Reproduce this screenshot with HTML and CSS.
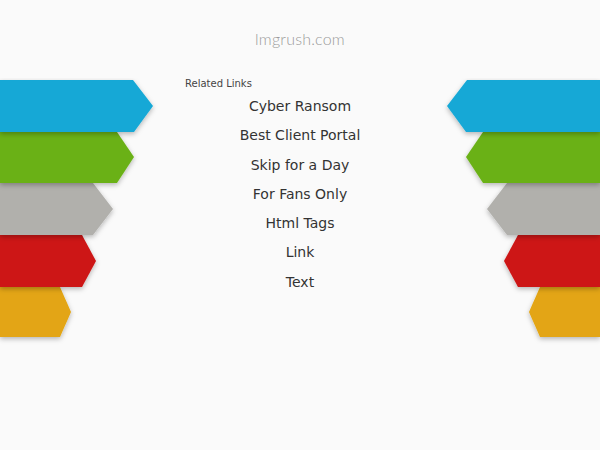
FILE: index.html
```html
<!DOCTYPE html>
<html lang="en">
<head>
  <meta charset="UTF-8" />
  <meta name="viewport" content="width=device-width, initial-scale=1.0" />
  <title>lmgrush.com</title>
  <link rel="stylesheet" href="styles.css">
</head>
<body>
  <header class="site-title">lmgrush.com</header>

  <div class="stage">
    <!-- left ribbons -->
    <svg class="ribbons" viewBox="0 78 160 272" width="160" height="272">
      <defs>
        <filter id="shade" x="-10%" y="-20%" width="130%" height="160%">
          <feDropShadow dx="0" dy="2" stdDeviation="2.5" flood-color="#000" flood-opacity="0.28"/>
        </filter>
      </defs>
      <polygon class="r-yellow" points="0,287 60,287 71,312 60,337 0,337" filter="url(#shade)"/>
      <polygon class="r-red" points="0,235 82,235 96,261 82,287 0,287" filter="url(#shade)"/>
      <polygon class="r-grey" points="0,183 93,183 113,209 93,235 0,235" filter="url(#shade)"/>
      <polygon class="r-green" points="0,132 117,132 134,157 117,183 0,183" filter="url(#shade)"/>
      <polygon class="r-blue" points="0,80 133,80 153,106 134,132 0,132" filter="url(#shade)"/>
    </svg>

    <div class="links">
      <p class="links-head">Related Links</p>
      <a href="#">Cyber Ransom</a>
      <a href="#">Best Client Portal</a>
      <a href="#">Skip for a Day</a>
      <a href="#">For Fans Only</a>
      <a href="#">Html Tags</a>
      <a href="#">Link</a>
      <a href="#">Text</a>
    </div>

    <!-- right ribbons, mirrored -->
    <svg class="ribbons flip" viewBox="0 78 160 272" width="160" height="272">
      <polygon class="r-yellow" points="0,287 60,287 71,312 60,337 0,337" filter="url(#shade)"/>
      <polygon class="r-red" points="0,235 82,235 96,261 82,287 0,287" filter="url(#shade)"/>
      <polygon class="r-grey" points="0,183 93,183 113,209 93,235 0,235" filter="url(#shade)"/>
      <polygon class="r-green" points="0,132 117,132 134,157 117,183 0,183" filter="url(#shade)"/>
      <polygon class="r-blue" points="0,80 133,80 153,106 134,132 0,132" filter="url(#shade)"/>
    </svg>
  </div>
</body>
</html>
```

FILE: styles.css
```css
body {
  margin: 0;
  background-color: #fafafa;
  font-family: 'DejaVu Sans', sans-serif;
  color: #333;
}
.site-title {
  font-family: 'Lato', 'Open Sans', sans-serif;
  font-weight: 300;
  font-size: 16px;
  color: #9a9a9a;
  text-align: center;
  height: 78px;
  line-height: 78px;
  letter-spacing: 0.2px;
}
.stage {
  display: flex;
  justify-content: space-between;
  align-items: flex-start;
}
.ribbons {
  display: block;
  flex: none;
}
.flip {
  transform: scaleX(-1);
}
.r-blue { fill: #15a8d6; }
.r-green { fill: #6ab117; }
.r-grey { fill: #b1b0ac; }
.r-red { fill: #cd1414; }
.r-yellow { fill: #e3a512; }
.links {
  flex: 1;
  display: flex;
  flex-direction: column;
  align-items: center;
}
.links-head {
  align-self: flex-start;
  margin: 0 0 2px 25px;
  font-size: 10px;
  line-height: 12px;
  color: #444;
}
.links a {
  display: block;
  font-size: 14px;
  line-height: 29.3px;
  color: #333;
  text-decoration: none;
}
```
